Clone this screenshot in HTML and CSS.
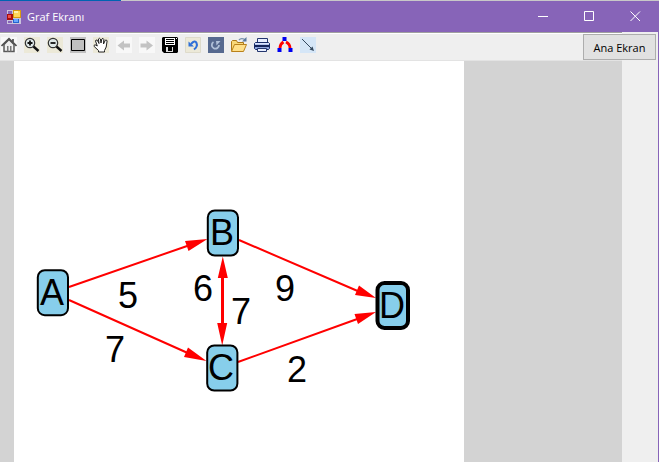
FILE: index.html
```html
<!DOCTYPE html>
<html lang="tr">
<head>
<meta charset="utf-8">
<title>Graf Ekranı</title>
<link rel="stylesheet" href="styles.css">
</head>
<body>
<div class="window">
  <div class="edge"></div>
  <header class="titlebar">
    <svg class="app-icon" viewBox="0 0 14 14" aria-hidden="true">
      <path fill="#c9c3dc" d="M0 0h14v14H0z"/>
      <path fill="#8764b8" d="M1 1h4v3H1zM1 11h4v2H1z"/>
      <path fill="#a80d0d" d="M0 4h6v6H0z"/><path fill="#f05048" d="M1 5h3v3H1z"/>
      <path fill="#d99a10" d="M6 0h8v8H6z"/><path fill="#ffd75a" d="M7 1h6v6H7z"/><path fill="#fff0ac" d="M7 1h4v2H7z"/>
      <path fill="#2464ce" d="M6 9h6v4H6z"/><path fill="#68a8ff" d="M7 9h4v3H7z"/>
    </svg>
    <h1 class="title">Graf Ekranı</h1>
    <div class="controls">
      <button class="control" aria-label="Simge durumuna küçült"><svg viewBox="0 0 11 11"><path d="M0 5.500h10"/></svg></button>
      <button class="control" aria-label="Ekranı kapla"><svg viewBox="0 0 11 11"><path d="M.5.500h9v9h-9z"/></svg></button>
      <button class="control" aria-label="Kapat"><svg viewBox="0 0 11 11"><path d="M.5.500l9.500 9.500M10 .500L.500 10"/></svg></button>
    </div>
  </header>
  <main class="client">
    <section class="viewer">
      <nav class="toolbar" aria-label="Araçlar">
        <button class="tool" aria-label="Ana görünüm"><svg viewBox="0 0 16 16"><path fill="#f8f8f8" d="M0 0h16v16H0z"/><path fill="#eee" stroke="#585858" stroke-width="1.500" d="M3 7.500v7h10v-7L8 2.500z"/><path fill="none" stroke="#505050" stroke-width="1.700" d="M.5 9L8 1.700 15.500 9M12 2v3"/><path fill="#777" d="M6 9h1.500v5.500H6zM9 9h1.500v5.500H9z"/></svg></button>
        <button class="tool" aria-label="Yakınlaştır"><svg viewBox="0 0 16 16"><path fill="#ece9d8" d="M0 0h16v16H0z"/><circle cx="6" cy="6" r="4.700" fill="#dfe8e8" stroke="#333" stroke-width="1.200"/><path stroke="#111" stroke-width="1.800" d="M3.500 6h5M6 3.500v5"/><path stroke="#111" stroke-width="2.400" d="M9.500 9.500L14.500 14"/></svg></button>
        <button class="tool" aria-label="Uzaklaştır"><svg viewBox="0 0 16 16"><path fill="#ece9d8" d="M0 0h16v16H0z"/><circle cx="6" cy="6" r="4.700" fill="#dfe8e8" stroke="#333" stroke-width="1.200"/><path stroke="#111" stroke-width="1.800" d="M3.500 6h5"/><path stroke="#111" stroke-width="2.400" d="M9.500 9.500L14.500 14"/></svg></button>
        <button class="tool" aria-label="Pencere yakınlaştırma"><svg viewBox="0 0 16 16"><path fill="#c0c0c0" d="M0 0h16v16H0z"/><path fill="none" stroke="#000" d="M1.500 2.500h13v11h-13z"/></svg></button>
        <button class="tool" aria-label="Kaydır"><svg viewBox="0 0 16 16"><path fill="#ece9d8" d="M0 0h16v16H0z"/><path fill="#fff" stroke="#222" stroke-linejoin="round" d="M5.500 15v-1.500L1.200 9.500Q.7 8 2 7.700L4.300 9 2.500 4q.3-1.600 1.800-.8L6 6.500 5.400 2q.9-1.500 2 0L8 6l.8-4q1.200-1.500 2 .3L10.500 7l1.800-3.800q1.400-.8 1.800.8L13.200 10l-1.700 3.500V15z"/></svg></button>
        <button class="tool" aria-label="Geri"><svg viewBox="0 0 16 16"><path fill="#f8f8f8" d="M0 0h16v16H0z"/><path fill="#c3c3c3" d="M1.500 8.500L8 3.500v3h6v4H8v3z"/></svg></button>
        <button class="tool" aria-label="İleri"><svg viewBox="0 0 16 16"><path fill="#f8f8f8" d="M0 0h16v16H0z"/><path fill="#c3c3c3" d="M14 8.500L7.500 3.500v3h-6v4h6v3z"/></svg></button>
        <button class="tool" aria-label="Kaydet"><svg viewBox="0 0 16 16"><path d="M0 1l1-1h14l1 1v14l-1 1H2l-2-2z"/><path fill="#fff" d="M3 1h10v7H3zM14 1h1v1h-1z"/><path d="M4 2h8v1H4zM4 4h8v1H4zM4 6h8v1H4z"/><path fill="#ddd" d="M4 10h2v4h4v-4h1v5H4z"/></svg></button>
        <button class="tool" aria-label="Geri al"><svg viewBox="0 0 16 16"><path fill="#ece9d8" stroke="#dedbcb" d="M.5.5h15v15H.5z"/><path fill="none" stroke="#2f70d8" stroke-width="2" d="M6 7Q10 2.500 11.500 6T9 12.500"/><path fill="#2f70d8" d="M3.500 4.500v5H9z"/></svg></button>
        <button class="tool" aria-label="Yinele"><svg viewBox="0 0 16 16"><path fill="#56698f" d="M0 0h16v16H0z"/><path fill="none" stroke="#b0c0d8" stroke-width="1.800" d="M5.500 5A3.600 3.600 0 1 0 11 8"/><path fill="#b0c0d8" d="M8 4h4.500L8.500 8.500z"/></svg></button>
        <button class="tool" aria-label="Aç"><svg viewBox="0 0 16 16"><path fill="#f8d878" stroke="#ad7818" d="M.5 13.500v-9l1-1h4l1 2h6v8z"/><path fill="#ffe08a" stroke="#b9811b" d="M.5 14.500l3-7h12l-3 7z"/><path fill="none" stroke="#7891ad" stroke-width="1.300" d="M8 3Q10 .5 14 2.500"/><path fill="#58799d" d="M15.500 0v4.500h-4.500z"/></svg></button>
        <button class="tool" aria-label="Yazdır"><svg viewBox="0 0 16 16"><path fill="#e8efff" stroke="#24366e" d="M3.500 5.500v-4h10v4z"/><path fill="#8fa5dc" stroke="#182c68" d="M1.500 5.500h13l1 1v5l-1 1h-13l-1-1v-5z"/><path fill="#dce6ff" d="M1 6h14v1.500H1z"/><path stroke="#14245a" stroke-width="2" d="M1 9h14"/><path fill="#e8efff" stroke="#24366e" d="M3.500 11.500h9v3h-9z"/></svg></button>
        <button class="tool" aria-label="Yerleşim"><svg viewBox="0 0 16 16"><path fill="none" stroke="#f00" stroke-width="2.800" d="M6.500 5Q3 7 3 11M9 5q4 2 4 6"/><path fill="#0000f0" d="M5.500 0h4v4h-4zM.5 11h4v4h-4zM11.500 11h4v4h-4z"/></svg></button>
        <button class="tool" aria-label="Kenar ekle"><svg viewBox="0 0 16 16"><path fill="#d5e6f7" d="M0 0h16v16H0z"/><path stroke="#34495e" d="M2 2l10 10"/><path fill="#34495e" d="M14 14l-4.500-1.500 3-3z"/></svg></button>
      </nav>
      <div class="canvas">
        <svg class="graph" viewBox="14 61 450 401" role="img" aria-label="Yönlü ağırlıklı graf">
          <g class="links">
            <path d="M69 287L190 245M69 300L190 354M239 240L360 292M238 362L360 318"/>
            <path class="double" d="M222.500 275V328"/>
          </g>
          <g class="heads">
            <path d="M207.500 239L185 241 188.500 251zM206.500 361L188 347.500 184 357zM376 298L359 285.500 355 295zM376 312L354.500 314 358 324zM222.800 256.500L217.800 278h10zM222.200 345.500L217.200 323h10z"/>
          </g>
          <g class="nodes">
            <rect x="37.800" y="270.200" width="30.200" height="45" rx="7"/>
            <rect x="207.800" y="210.500" width="30.200" height="45" rx="7"/>
            <rect x="207.200" y="345.500" width="30.200" height="45" rx="7"/>
            <rect class="selected" x="377.500" y="283" width="30.500" height="45" rx="7"/>
          </g>
          <g class="labels">
            <text x="52" y="305">A</text>
            <text x="222" y="245">B</text>
            <text x="221" y="380">C</text>
            <text x="392" y="318">D</text>
            <text x="128" y="308">5</text>
            <text x="115" y="362">7</text>
            <text x="203" y="301">6</text>
            <text x="241" y="324">7</text>
            <text x="285" y="301">9</text>
            <text x="297" y="382">2</text>
          </g>
        </svg>
      </div>
    </section>
    <button class="home">Ana Ekran</button>
  </main>
</div>
</body>
</html>
```
FILE: styles.css
```css
* { box-sizing: border-box; }

body {
  margin: 0;
  font-family: "Open Sans", "Noto Sans", sans-serif;
  font-size: 11px;
}

button {
  margin: 0;
  padding: 0;
  border: 0;
  background: none;
  font: inherit;
}

svg { display: block; }

.window {
  display: flex;
  flex-direction: column;
  min-height: 100vh;
  background: #efefef;
}

.edge {
  height: 1px;
  background: linear-gradient(90deg, #0063b1 0 121px, #c8c8c8 121px);
}

.titlebar {
  display: flex;
  align-items: center;
  height: 31px;
  padding: 0 1px 0 7px;
  background: #8764b8;
  color: #fff;
}

.app-icon { width: 14px; height: 14px; }

.title {
  flex: 1;
  margin: 0 0 0 6px;
  font-size: 11px;
  font-weight: 400;
}

.controls { display: flex; }

.control {
  display: grid;
  place-items: center;
  width: 46px;
  height: 31px;
}

.control svg {
  width: 11px;
  height: 11px;
  fill: none;
  stroke: #fff;
}

.client {
  position: relative;
  display: flex;
  flex: 1;
  padding-right: 36px;
  border-right: 1px solid #8764b8;
}

.viewer {
  display: flex;
  flex: 1;
  flex-direction: column;
  border-top: 1px solid #a0a0a0;
}

.toolbar {
  display: flex;
  gap: 7px;
  height: 28px;
  padding: 3px 1px;
  border-top: 1px solid #fff;
  border-bottom: 1px solid #e3e3e3;
}

.tool,
.tool svg {
  width: 16px;
  height: 16px;
}

.canvas {
  flex: 1;
  padding: 0 158px 0 14px;
  background: #d3d3d3;
}

.graph {
  width: 100%;
  height: 100%;
  background: #fff;
}

.links { stroke: #f00; stroke-width: 2; }
.double { stroke-width: 3; }
.heads { fill: #f00; }

.nodes {
  fill: #87ceeb;
  stroke: #000;
  stroke-width: 2;
}

.nodes .selected { stroke-width: 4; }

.labels {
  font-family: "Liberation Sans", Arial, sans-serif;
  font-size: 36px;
  text-anchor: middle;
}

.home {
  position: absolute;
  top: 2px;
  right: 2px;
  width: 73px;
  height: 26px;
  border: 1px solid #adadad;
  background: #e1e1e1;
  color: #000;
}
```
